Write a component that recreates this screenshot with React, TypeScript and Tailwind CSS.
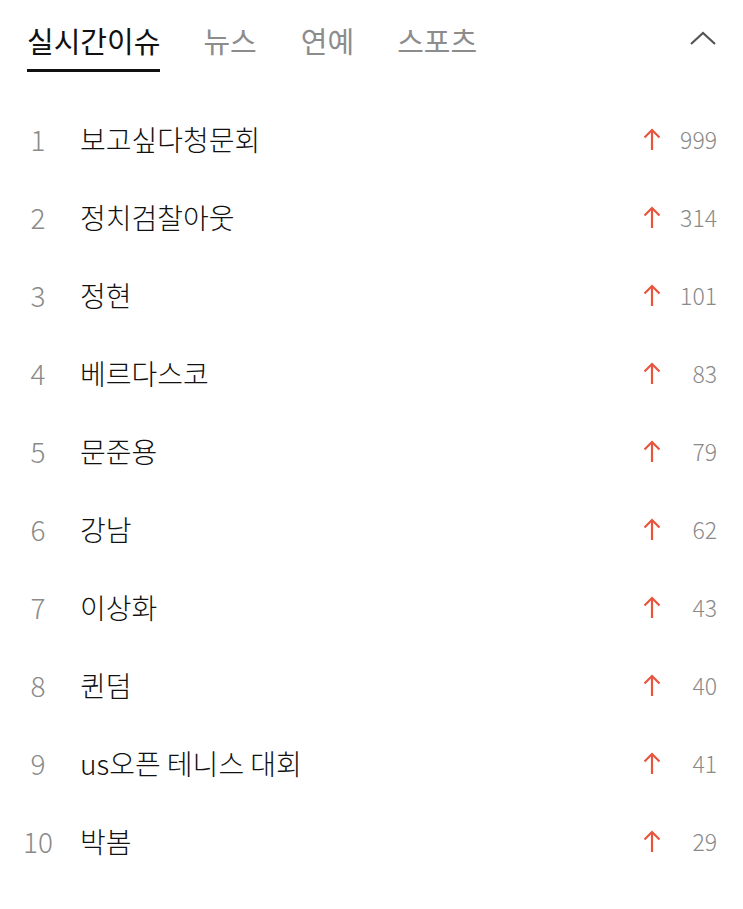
import React from "react";

const items = [
  ["보고싶다청문회", "999"],
  ["정치검찰아웃", "314"],
  ["정현", "101"],
  ["베르다스코", "83"],
  ["문준용", "79"],
  ["강남", "62"],
  ["이상화", "43"],
  ["퀸덤", "40"],
  ["us오픈 테니스 대회", "41"],
  ["박봄", "29"],
];

const font = { fontFamily: '"Noto Sans CJK KR", "Noto Sans", sans-serif' };

export default function App() {
  return (
    <div className="w-[743px] h-[909px] bg-white font-light" style={font}>
      <div className="h-[100px] flex items-start pl-[27px] pr-[26px]">
        <div className="flex flex-col pt-[19px]">
          <span className="text-[29px] leading-[42px] text-[#111] font-normal">실시간이슈</span>
          <div className="mt-[8px] h-[3px] w-[133px] bg-[#111]" />
        </div>
        <span className="ml-[43px] pt-[19px] text-[29px] leading-[42px] text-[#8c8c8c] font-normal">뉴스</span>
        <span className="ml-[44px] pt-[19px] text-[29px] leading-[42px] text-[#8c8c8c] font-normal">연예</span>
        <span className="ml-[43px] pt-[19px] text-[29px] leading-[42px] text-[#8c8c8c] font-normal">스포츠</span>
        <div className="ml-auto pt-[29px]">
          <svg width="28" height="18" viewBox="0 0 28 18">
            <polyline points="2,15 14,4 26,15" fill="none" stroke="#555" strokeWidth="2.2" />
          </svg>
        </div>
      </div>
      <ul>
        {items.map(([t, n], i) => (
          <li key={i} className="h-[78px] flex items-center pr-[26px]">
            <span className="w-[36px] ml-[20px] text-center text-[28px] text-[#8a8a8a]">{i + 1}</span>
            <span className="ml-[24px] text-[28px] text-[#111]">{t}</span>
            <svg className="ml-auto" width="18" height="24" viewBox="0 0 18 24">
              <line x1="9" y1="3" x2="9" y2="23" stroke="#e8553e" strokeWidth="2.2" />
              <polyline points="1.5,10.5 9,3 16.5,10.5" fill="none" stroke="#e8553e" strokeWidth="2.2" />
            </svg>
            <span className="w-[56px] text-right text-[23px] text-[#8a8a8a]">{n}</span>
          </li>
        ))}
      </ul>
    </div>
  );
}
